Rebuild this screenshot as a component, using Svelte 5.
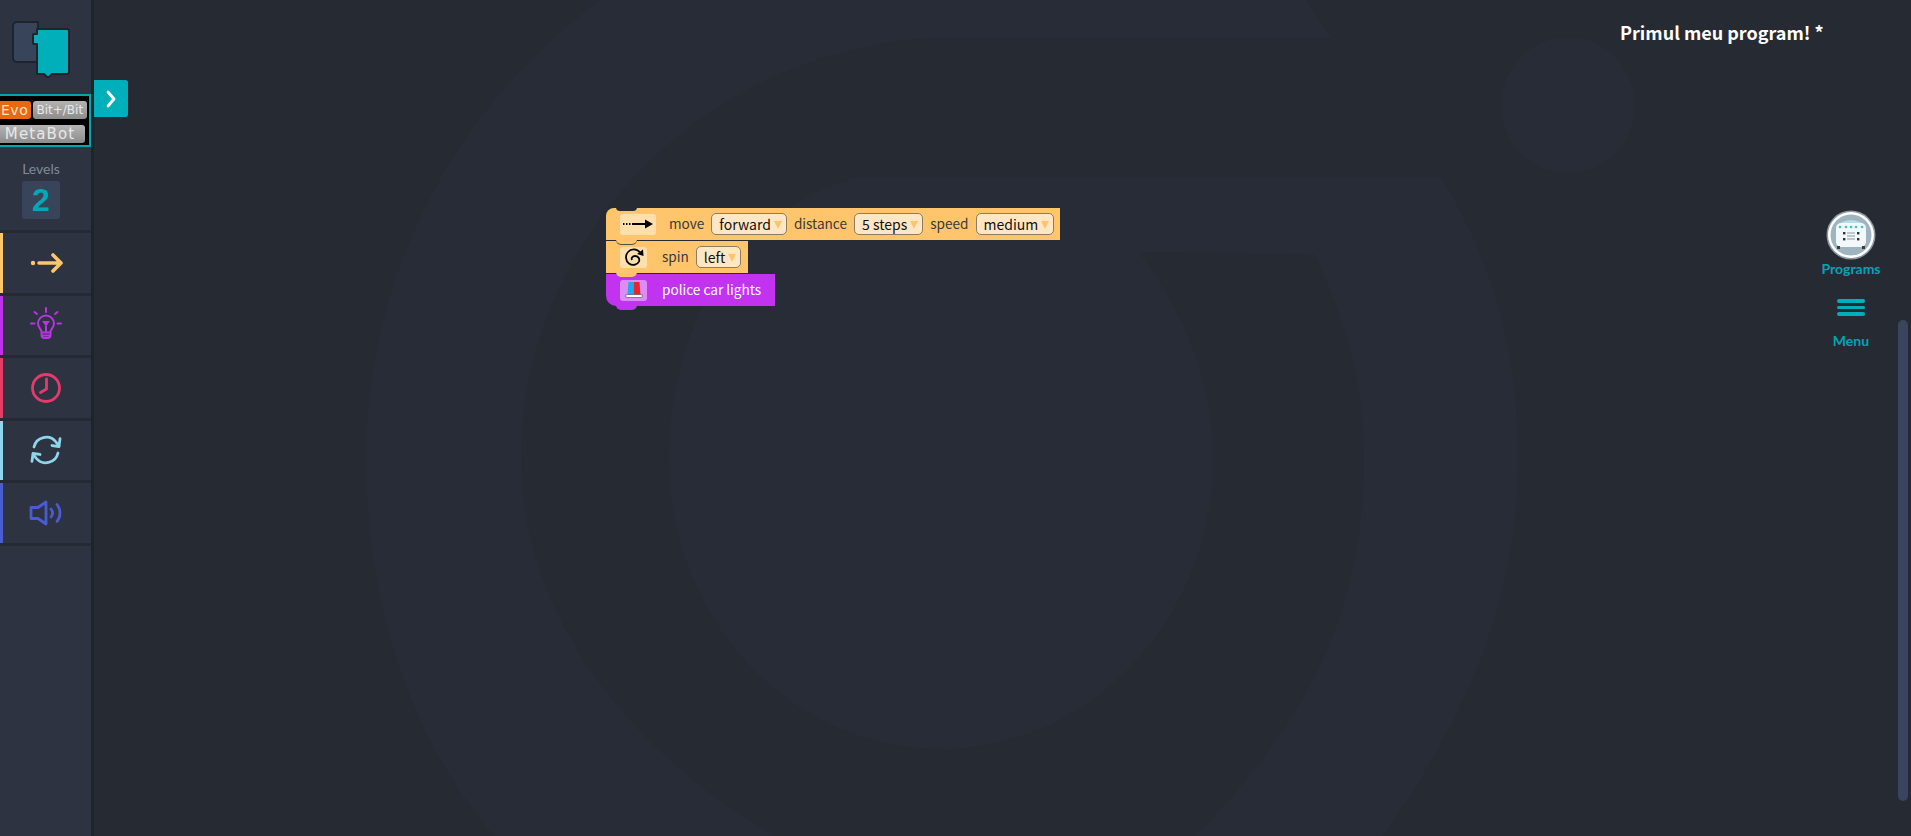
<script>
	// Blocks currently placed on the canvas
	const stack = [
		{ id: "move", icon: "arrow", parts: [["move"], ["forward"], ["distance"], ["5 steps"], ["speed"], ["medium"]] },
		{ id: "spin", icon: "spin", parts: [["spin"], ["left"]] },
		{ id: "lights", icon: "police", parts: [["police car lights"]] }
	];
</script>

<div class="app">
	<aside class="sidebar">
		<div class="logo">
			<svg width="62" height="60" viewBox="0 0 62 60">
				<path d="M6 2h21v40H6a4 4 0 0 1-4-4V6a4 4 0 0 1 4-4z" fill="#38445a" stroke="#1f232c" stroke-width="2" />
				<path d="M26 9h30a2 2 0 0 1 2 2v41a2 2 0 0 1-2 2H41l-3 3h-2l-3-3h-7V24h-3a1 1 0 0 1-1-1v-8a1 1 0 0 1 1-1h3z" fill="#00afb9" stroke="#1f232c" stroke-width="2" stroke-linejoin="round" />
			</svg>
		</div>
		<div class="robots">
			<div class="robot-row">
				<span class="robot evo">Evo</span>
				<span class="robot bit">Bit+/Bit</span>
			</div>
			<div class="robot-row">
				<span class="robot meta">MetaBot</span>
			</div>
		</div>
		<div class="levels">
			<span class="levels-label">Levels</span>
			<span class="levels-num">2</span>
		</div>
		<nav class="cats">
			<button class="cat move">
				<svg width="40" height="40" viewBox="0 0 40 40" fill="none" stroke="#ffc56d" stroke-width="3.600" stroke-linecap="round" stroke-linejoin="round">
					<circle cx="7" cy="20" r="2.200" fill="#ffc56d" stroke="none" />
					<path d="M13 20h22M27 12l8 8-8 8" />
				</svg>
			</button>
			<button class="cat look">
				<svg width="40" height="40" viewBox="0 0 40 40" fill="none" stroke="#bb33e6" stroke-width="2" stroke-linecap="round">
					<path d="M15.500 27c0-3-3.500-4-3.500-8.500a8 8 0 0 1 16 0c0 4.500-3.500 5.500-3.500 8.500v3a3 3 0 0 1-3 3h-3a3 3 0 0 1-3-3z" />
					<path d="M16 27.500h8M16.500 30.500h7M20 27v-6M18 17h4l-2 3z" />
					<path d="M20 3v4M8.500 7l2.500 2M31.500 7l-2.500 2M5 18.500h3.500M31.500 18.500h3.500" />
				</svg>
			</button>
			<button class="cat time">
				<svg width="40" height="40" viewBox="0 0 40 40" fill="none" stroke="#e8396b" stroke-width="2.800" stroke-linecap="round" stroke-linejoin="round">
					<circle cx="20" cy="20" r="13.500" />
					<path d="M20.500 11v10l-6 3.500" />
				</svg>
			</button>
			<button class="cat loop">
				<svg width="40" height="40" viewBox="0 0 40 40" fill="none" stroke="#8ed6ea" stroke-width="2.800" stroke-linecap="round" stroke-linejoin="round">
					<path d="M8 17a12.500 12.500 0 0 1 22-5l3 4" />
					<path d="M33 8.500V16.500h-7" transform="rotate(8 33 16)" />
					<path d="M32 23a12.500 12.500 0 0 1-22 5l-3-4" />
					<path d="M7 31.500V23.500h7" transform="rotate(8 7 24)" />
				</svg>
			</button>
			<button class="cat sound">
				<svg width="40" height="40" viewBox="0 0 40 40" fill="none" stroke="#4b5bd0" stroke-width="2.800" stroke-linejoin="round" stroke-linecap="round">
					<path d="M5 14.500h7L20 9v22l-8-5.500H5z" />
					<path d="M25 16c2 2.500 2 5.500 0 8M31 11.500c4 5 4 12 0 17" />
				</svg>
			</button>
		</nav>
	</aside>

	<button class="toggle" aria-label="Open toolbox">
		<svg width="12" height="20" viewBox="0 0 12 20" fill="none" stroke="#fff" stroke-width="2.800" stroke-linecap="round" stroke-linejoin="round">
			<path d="M3 3l6 7-6 7" />
		</svg>
	</button>

	<main class="main">
		<svg class="watermark" width="1817" height="836" viewBox="94 0 1817 836">
			<path d="M600 0L1306 0L1331 37L938 37C700 50 521 240 521 459C521 620 640 760 776 836L494 836C420 750 366 620 366 459C366 280 450 110 600 0Z" />
			<path d="M853 178L1442 178C1490 260 1518 340 1518 459C1518 620 1450 740 1383 836L1195 836C1300 730 1364 620 1364 459C1364 380 1345 320 1314 254L1139 252C1190 320 1213 390 1213 459C1213 620 1090 749 941 749C790 749 669 620 669 459C669 320 740 210 853 178Z" />
			<ellipse cx="1568" cy="105" rx="67" ry="68" />
		</svg>

		<section class="canvas">
			{#each stack as block}
				<div class="block {block.id}">
					<span class="block-icon">
						{#if block.icon === "arrow"}
							<svg width="32" height="14" viewBox="0 0 32 14" fill="#000">
								<path d="M1 6h1.500v2H1zM4 6h1.500v2H4zM7 6h1.500v2H7zM10 6h14v2H10z" />
								<path d="M23 2.500l8 4.500-8 4.500z" />
							</svg>
						{:else if block.icon === "spin"}
							<svg width="22" height="22" viewBox="0 0 22 22" fill="none" stroke="#000" stroke-width="1.800">
								<path d="M17 6.500C14 2.500 8 2.500 5 6 2 9.500 2.500 15 6 17.500c3.500 2.500 8.500 1.500 10-2 1-3-1-5.500-4-5.500-2.500 0-4 2-3 4" />
								<path d="M14 8l6-4.500.5 6.500z" fill="#000" stroke="none" />
							</svg>
						{:else}
							<svg width="22" height="22" viewBox="0 0 22 22">
								<path d="M5.500 3h5.500v13H4.500z" fill="#22a8e6" />
								<path d="M11 3h5.500l1 13H11z" fill="#e8252f" />
								<rect x="2.500" y="15.500" width="17" height="3" rx="1.500" fill="#fff" stroke="#444" stroke-width=".6" />
							</svg>
						{/if}
					</span>
					{#each block.parts as [label], i}
						{#if block.id === "lights" || i % 2 === 0}
							<span class="label">{label}</span>
						{:else}
							<span class="select">{label}<i class="caret"></i></span>
						{/if}
					{/each}
				</div>
			{/each}
		</section>

		<aside class="rail">
			<h1 class="title">Primul meu program! *</h1>
			<button class="rail-item programs">
				<svg width="50" height="50" viewBox="0 0 50 50">
					<circle cx="25" cy="25" r="24.500" fill="#8c9aa2" />
					<circle cx="25" cy="25" r="23" fill="#fff" />
					<circle cx="25" cy="25" r="20.500" fill="#9eb5c0" />
					<path d="M14 14c3-5 19-5 22 0z" fill="#b9dde6" />
					<rect x="10" y="13" width="30" height="24" rx="5" fill="#f3f8fb" />
					<path d="M11 36h3v3h-3zM36 36h3v3h-3z" fill="#3a3f46" />
					<g fill="#38c6da">
						<circle cx="14" cy="17" r="1.300" /><circle cx="20" cy="17" r="1.300" /><circle cx="25" cy="17" r="1.300" /><circle cx="30" cy="17" r="1.300" /><circle cx="36" cy="17" r="1.300" />
					</g>
					<g fill="#333">
						<rect x="17" y="22" width="2.400" height="2.400" /><rect x="31" y="22" width="2.400" height="2.400" /><rect x="17" y="28" width="2.400" height="2.400" /><rect x="31" y="28" width="2.400" height="2.400" />
					</g>
					<path d="M21 23h8M21 26h8M21 29h8" stroke="#8a98a6" stroke-width="1" />
				</svg>
				<span>Programs</span>
			</button>
			<button class="rail-item menu">
				<span class="burger"><i></i><i></i><i></i></span>
				<span>Menu</span>
			</button>
		</aside>

		<div class="scroll-thumb"></div>
	</main>
</div>

<style>
	:global(body) {
		margin: 0;
		overflow: hidden;
		background: #262a33;
	}

	button {
		border: none;
		background: none;
		padding: 0;
		font: inherit;
		color: inherit;
		cursor: pointer;
	}

	.app {
		position: relative;
		display: flex;
		height: 836px;
		font-family: Lato, sans-serif;
		overflow: hidden;
	}

	/* Left toolbox */
	.sidebar {
		flex: 0 0 91px;
		display: flex;
		flex-direction: column;
		background: #2d3340;
		border-right: 3px solid #1f232d;
		overflow: hidden;
	}

	.logo {
		height: 94px;
		padding: 20px 0 0 11px;
		box-sizing: border-box;
	}

	.logo svg {
		display: block;
	}

	.robots {
		width: 103px;
		height: 53px;
		margin-left: -12px;
		box-sizing: border-box;
		border: 2px solid #00a5b0;
		background: #000;
		padding: 5px 2px 0 0;
		display: flex;
		flex-direction: column;
		gap: 6px;
	}

	.robot-row {
		display: flex;
		gap: 2px;
	}

	.robot {
		height: 18px;
		line-height: 18px;
		border-radius: 3px;
		font-family: "DejaVu Sans", sans-serif;
		text-align: center;
		color: #e8e8e8;
		background: linear-gradient(#b4b4b4, #8c8c8c);
		white-space: nowrap;
	}

	.evo {
		width: 41px;
		background: #e8690f;
		color: #ffe3c8;
		font-size: 14px;
		letter-spacing: 0.500px;
		text-align: left;
		padding-left: 11px;
		box-sizing: border-box;
	}

	.bit {
		width: 55px;
		font-size: 12px;
		letter-spacing: 0;
	}

	.meta {
		width: 95px;
		font-size: 15px;
		letter-spacing: 1.100px;
		padding-left: 5px;
		box-sizing: border-box;
	}

	.levels {
		display: flex;
		flex-direction: column;
		align-items: center;
		gap: 4px;
		padding: 13px 9px 0 0;
		height: 83px;
		box-sizing: border-box;
	}

	.levels-label {
		font-size: 14px;
		line-height: 17px;
		color: #7f8a9b;
	}

	.levels-num {
		width: 38px;
		height: 38px;
		line-height: 38px;
		text-align: center;
		background: #38445a;
		border-radius: 3px;
		font-family: "Liberation Sans", sans-serif;
		font-weight: 700;
		font-size: 32px;
		color: #00a8b8;
	}

	.cats {
		display: flex;
		flex-direction: column;
		gap: 3px;
		background: #252934;
		padding: 3px 0;
	}

	.cat {
		height: 59.500px;
		display: flex;
		align-items: center;
		justify-content: center;
		background: #2d3340;
		border-left: 3px solid;
		padding-right: 2px;
	}

	.cat.move { border-color: #ffc56d; }
	.cat.look { border-color: #bb33e6; }
	.cat.time { border-color: #e8396b; }
	.cat.loop { border-color: #8ed6ea; }
	.cat.sound { border-color: #4b5bd0; }

	.toggle {
		position: absolute;
		left: 94px;
		top: 80px;
		width: 34px;
		height: 37px;
		z-index: 2;
		display: flex;
		align-items: center;
		justify-content: center;
		background: #00afb9;
		border-radius: 0 3px 3px 0;
	}

	/* Workspace */
	.main {
		position: relative;
		flex: 1;
		display: flex;
		min-width: 0;
	}

	.watermark {
		position: absolute;
		left: 0;
		top: 0;
		fill: #282c36;
	}

	.canvas {
		position: relative;
		flex: 1;
		display: flex;
		flex-direction: column;
		align-items: flex-start;
		gap: 1px;
		padding: 208px 0 0 512px;
		font-family: "Noto Sans CJK SC", "Noto Sans", sans-serif;
		font-size: 13.600px;
	}

	.block {
		position: relative;
		box-sizing: border-box;
		height: 32px;
		display: flex;
		align-items: center;
		background: #ffc56d;
		color: #3b3a36;
		padding: 0 6px 0 14px;
		white-space: nowrap;
	}

	.block::after {
		content: "";
		position: absolute;
		left: 10px;
		bottom: -4px;
		width: 21px;
		height: 5px;
		background: inherit;
		border-radius: 0 0 10px 10px;
		z-index: 1;
	}

	.block.move {
		border-top-left-radius: 8px;
		width: 454px;
	}

	.block.move::before {
		content: "";
		position: absolute;
		left: 10px;
		top: -1px;
		width: 21px;
		height: 4px;
		background: #262a33;
		border-radius: 0 0 10px 10px;
	}

	.block.move::after {
		box-shadow: 0 1px 0 #57503f;
	}

	.block.move .block-icon {
		width: 36px;
		margin-right: 13px;
	}

	.block.spin {
		width: 142px;
	}

	.block.lights {
		width: 169px;
		background: #c233ef;
		color: #fff;
		border-bottom-left-radius: 10px;
	}

	.block-icon {
		flex: none;
		display: flex;
		align-items: center;
		justify-content: center;
		box-sizing: border-box;
		width: 27px;
		height: 21px;
		margin-right: 15px;
		background: #ffe0ad;
		border-radius: 3px;
	}

	.lights .block-icon {
		background: #dc8df5;
	}

	.label {
		line-height: 20px;
		margin-top: -2px;
	}

	.select {
		flex: none;
		display: inline-flex;
		align-items: center;
		box-sizing: border-box;
		height: 22px;
		margin: 0 7px;
		padding: 0 4px 0 7px;
		background: #ffe6c4;
		border: 1px solid #8d7c5e;
		border-radius: 5px;
		color: #111;
		font-size: 14px;
	}

	.caret {
		width: 0;
		height: 0;
		margin: 2px 0 0 3px;
		border-left: 4px solid transparent;
		border-right: 4px solid transparent;
		border-top: 8px solid #ffc56d;
	}

	/* Right rail */
	.rail {
		position: relative;
		flex: 0 0 291px;
		display: flex;
		flex-direction: column;
	}

	.title {
		margin: 18px 0 0;
		font-family: "Noto Sans CJK SC", "Noto Sans", sans-serif;
		font-size: 18px;
		line-height: 28px;
		font-weight: 700;
		color: #fff;
	}

	.rail-item {
		width: 62px;
		margin-left: 200px;
		display: flex;
		flex-direction: column;
		align-items: center;
		font-size: 14px;
		line-height: 17px;
		font-weight: 700;
		color: #00a5b5;
	}

	.programs {
		margin-top: 164px;
		gap: 0;
	}

	.menu {
		margin-top: 22px;
		gap: 16px;
	}

	.burger {
		display: flex;
		flex-direction: column;
		gap: 3px;
		width: 28px;
	}

	.burger i {
		display: block;
		height: 3.500px;
		background: #00afb9;
		border-radius: 2px;
	}

	.scroll-thumb {
		position: absolute;
		right: 3px;
		top: 320px;
		width: 10px;
		height: 481px;
		background: #3a445c;
		border-radius: 5px;
	}
</style>
